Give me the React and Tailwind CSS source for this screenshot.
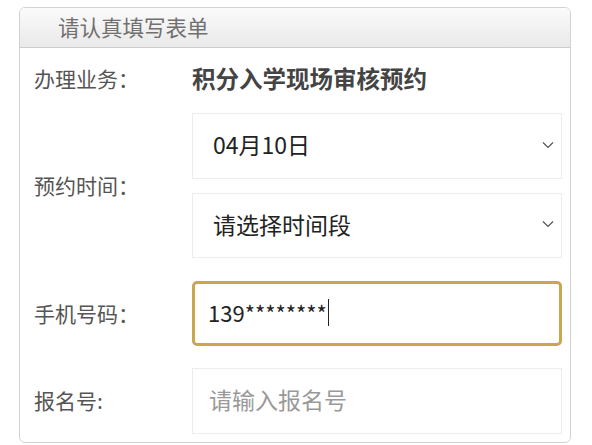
const font = { fontFamily: '"Noto Sans CJK SC", "Noto Sans", sans-serif' };

function Chevron() {
  return (
    <svg width="12" height="8" viewBox="0 0 12 8" className="shrink-0">
      <path d="M1 1.5 L6 6.5 L11 1.5" fill="none" stroke="#555" strokeWidth="1.2" />
    </svg>
  );
}

function SelectBox({ text, className = "" }) {
  return (
    <div className={`flex items-center justify-between border border-[#ececec] bg-white pl-[20px] pr-[7px] pb-[3px] ${className}`}>
      <span className="text-[23px] text-[#222]">{text}</span>
      <Chevron />
    </div>
  );
}

export default function App() {
  return (
    <div className="w-[592px] h-[445px] bg-white pt-[7px] pl-[19px] pr-[21px] overflow-hidden" style={font}>
      <div className="h-[436px] border border-[#d3d3d3] rounded-[6px] overflow-hidden flex flex-col">
        <div className="h-[40px] shrink-0 flex items-center pl-[38px] border-b border-[#cdcdcd] bg-gradient-to-b from-[#fbfbfb] to-[#e9e9e9]">
          <span className="text-[21.5px] text-[#707070]">请认真填写表单</span>
        </div>

        <div className="flex-1 flex flex-col pl-[14px] pr-[8px]">
          <div className="h-[62px] flex items-center">
            <span className="w-[158px] text-[21px] text-[#555]">办理业务：</span>
            <span className="text-[23.5px] font-bold text-[#444]">积分入学现场审核预约</span>
          </div>

          <div className="flex items-center mt-[3px]">
            <span className="w-[158px] shrink-0 text-[21px] text-[#555]">预约时间：</span>
            <div className="flex-1 flex flex-col gap-[14px]">
              <SelectBox text="04月10日" className="h-[66px]" />
              <SelectBox text="请选择时间段" className="h-[65px]" />
            </div>
          </div>

          <div className="flex items-center mt-[23px]">
            <span className="w-[158px] shrink-0 text-[21px] text-[#555]">手机号码：</span>
            <div className="flex-1 h-[65px] flex items-center border-[3px] border-[#c9a74c] rounded-[5px] pl-[13px] pb-[3px] bg-white">
              <span className="text-[22px] text-[#222]">139********</span>
              <span className="w-[1.5px] h-[27px] bg-[#222] ml-[1px]" />
            </div>
          </div>

          <div className="flex items-center mt-[22px]">
            <span className="w-[158px] shrink-0 text-[21px] text-[#555]">报名号:</span>
            <div className="flex-1 h-[66px] flex items-center border border-[#ececec] pl-[16px] pb-[3px] bg-white">
              <span className="text-[23px] text-[#999]">请输入报名号</span>
            </div>
          </div>
        </div>
      </div>
    </div>
  );
}
